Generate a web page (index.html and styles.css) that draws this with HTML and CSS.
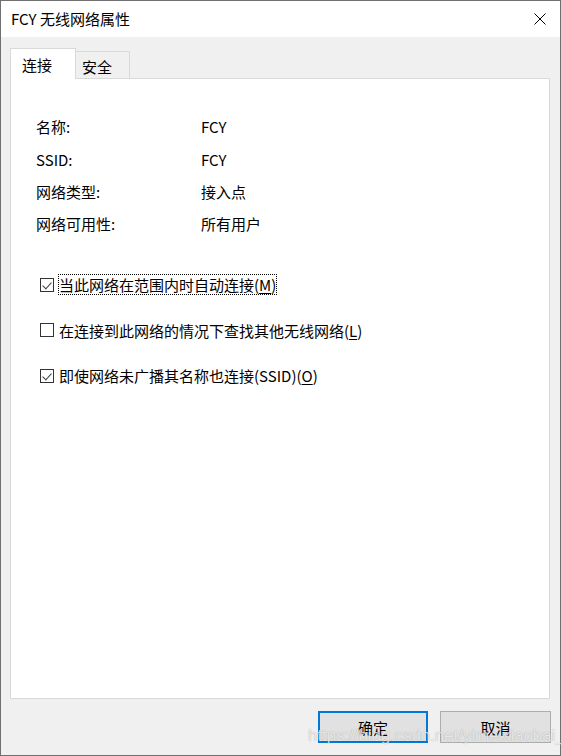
FILE: index.html
```html
<!DOCTYPE html>
<html lang="zh-CN">
<head>
  <meta charset="UTF-8">
  <title>FCY 无线网络属性</title>
  <link rel="stylesheet" href="styles.css">
</head>
<body>

  <div class="window">
    <div class="titlebar">
      <span class="title">FCY 无线网络属性</span>
      <svg class="close" width="12" height="12" viewBox="0 0 12 12">
        <path d="M0.5 0.5 L11.5 11.5 M11.5 0.5 L0.5 11.5" stroke="#000" stroke-width="1" fill="none"/>
      </svg>
    </div>

    <div class="dialog-body">
      <div class="tabs">
        <div class="tab active">连接</div>
        <div class="tab">安全</div>
      </div>

      <div class="panel">
        <div class="props">
          <span>名称:</span><span>FCY</span>
          <span>SSID:</span><span>FCY</span>
          <span>网络类型:</span><span>接入点</span>
          <span>网络可用性:</span><span>所有用户</span>
        </div>

        <div class="options">
          <div class="option">
            <span class="box checked"></span>
            <span class="opt-text focus">当此网络在范围内时自动连接(<u>M</u>)</span>
          </div>
          <div class="option">
            <span class="box"></span>
            <span class="opt-text">在连接到此网络的情况下查找其他无线网络(<u>L</u>)</span>
          </div>
          <div class="option">
            <span class="box checked"></span>
            <span class="opt-text">即使网络未广播其名称也连接(SSID)(<u>O</u>)</span>
          </div>
        </div>
      </div>

      <div class="buttons">
        <button class="btn default">确定</button>
        <button class="btn">取消</button>
      </div>
    </div>

    <div class="watermark">https://blog.csdn.net/yimeixiaobai_</div>
  </div>

</body>
</html>
```

FILE: styles.css
```css
body {
  margin: 0;
  font-family: "Noto Sans CJK SC", sans-serif;
  font-size: 15px;
  color: #000;
  background: #fff;
}

.window {
  position: relative;
  width: 561px;
  height: 756px;
  box-sizing: border-box;
  border: 1px solid #707070;
  background: #f0f0f0;
  display: flex;
  flex-direction: column;
}

.titlebar {
  height: 36px;
  background: #fff;
  display: flex;
  align-items: center;
  justify-content: space-between;
  padding: 0 14px 0 10px;
}

.title {
  line-height: 20px;
}

.dialog-body {
  flex: 1;
  padding: 11px 10px 0 9px;
  display: flex;
  flex-direction: column;
}

.tabs {
  display: flex;
  align-items: flex-end;
}

.tab {
  box-sizing: border-box;
  height: 27px;
  padding: 5px 0 0 6px;
  width: 55px;
  line-height: 20px;
  border: 1px solid #d9d9d9;
  border-bottom: none;
  background: #f0f0f0;
  margin-left: -1px;
}

.tab.active {
  position: relative;
  z-index: 1;
  width: 66px;
  height: 31px;
  padding: 6px 0 0 11px;
  margin-left: 0;
  margin-bottom: -1px;
  background: #fff;
}

.panel {
  height: 619px;
  background: #fff;
  border: 1px solid #d9d9d9;
}

.props {
  display: grid;
  grid-template-columns: 165px auto;
  grid-auto-rows: 32.4px;
  align-items: center;
  padding: 32px 0 0 25px;
  line-height: 20px;
}

.options {
  display: flex;
  flex-direction: column;
  gap: 23.5px;
  margin-top: 33px;
  padding-left: 29px;
}

.option {
  display: flex;
  align-items: center;
  height: 22px;
}

.box {
  box-sizing: border-box;
  width: 14px;
  height: 14px;
  border: 1px solid #333;
  background: #fff;
  margin-right: 4px;
  position: relative;
}

.box.checked::after {
  content: "";
  position: absolute;
  left: 3px;
  top: 1px;
  width: 7px;
  height: 4px;
  border-left: 1px solid #444;
  border-bottom: 1px solid #444;
  transform: translate(-1px, 2px) rotate(-48deg) scaleX(1.1);
}

.opt-text {
  line-height: 19px;
  padding: 0;
  border: 1px dotted transparent;
}

.opt-text.focus {
  border-color: #000;
}

.opt-text u {
  text-underline-offset: 2px;
}

.buttons {
  display: flex;
  justify-content: flex-end;
  gap: 12px;
  margin: 12px -1px 0 0;
}

.btn {
  box-sizing: border-box;
  width: 111px;
  height: 32px;
  font-family: "Noto Sans CJK SC", sans-serif;
  font-size: 15px;
  color: #000;
  background: #e1e1e1;
  border: 1px solid #adadad;
  padding: 0;
}

.btn.default {
  width: 110px;
  border: 2px solid #0078d7;
}

.watermark {
  position: absolute;
  left: 307px;
  top: 725px;
  font-family: "Liberation Sans", sans-serif;
  font-size: 16.8px;
  color: rgba(255, 255, 255, 0.75);
  text-shadow: 0 0 1px rgba(0, 0, 0, 0.35);
  pointer-events: none;
}
```
